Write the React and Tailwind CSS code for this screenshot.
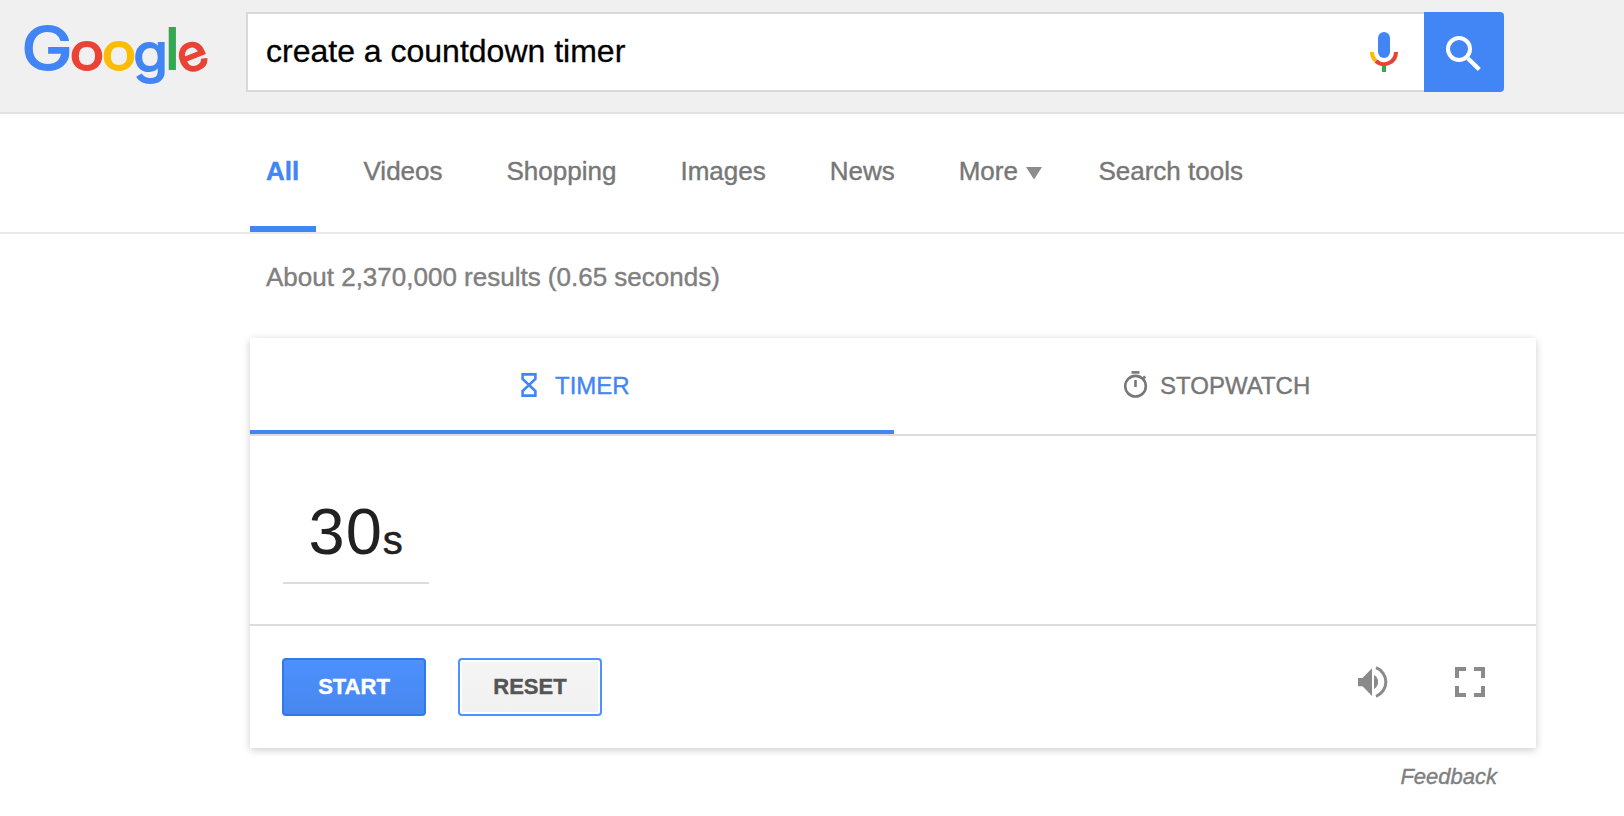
const NAV = ["Videos", "Shopping", "Images", "News"];

function Logo() {
  return (
    <svg
      className="h-[112px] w-[246px] shrink-0 font-['Inter',sans-serif]"
      viewBox="0 0 246 112"
      role="img"
      aria-label="Google"
      strokeWidth="1.8"
    >
      <text x="21.4" y="70" fontSize="60" fill="#4285f4" stroke="#4285f4" textLength="51" lengthAdjust="spacingAndGlyphs">G</text>
      <text x="69.8" y="70.3" fontSize="51" fill="#ea4335" stroke="#ea4335" textLength="34.4" lengthAdjust="spacingAndGlyphs">o</text>
      <text x="101.8" y="70.3" fontSize="51" fill="#fbbc05" stroke="#fbbc05" textLength="34.4" lengthAdjust="spacingAndGlyphs">o</text>
      <text x="133.3" y="71.5" fontSize="53" fill="#4285f4" stroke="#4285f4" textLength="34.8" lengthAdjust="spacingAndGlyphs">g</text>
      <text x="165.4" y="69.2" fontSize="56.5" fill="#34a853" stroke="#34a853" strokeWidth="2.2">l</text>
      <text x="177.3" y="70.3" fontSize="50" fill="#ea4335" stroke="#ea4335" textLength="30" lengthAdjust="spacingAndGlyphs" transform="rotate(-22 192.3 56)">e</text>
    </svg>
  );
}

function MicIcon() {
  return (
    <svg className="h-10 w-7" viewBox="0 0 28 40" fill="none">
      <rect x="8" y="0" width="12" height="26" rx="6" fill="#4285f4" />
      <path d="M2 20a12 12 0 0 0 4 9" stroke="#fbbc05" strokeWidth="4" />
      <path d="M6 29A12 12 0 0 0 26 20" stroke="#ea4335" strokeWidth="4" />
      <path d="M14 34v6" stroke="#34a853" strokeWidth="4" />
    </svg>
  );
}

function Header() {
  return (
    <header className="flex h-[114px] border-b-2 border-[#e2e2e2] bg-[#f0f0f0]">
      <Logo />
      <div className="mt-3 flex h-20">
        <div className="flex w-[1178px] items-center justify-between border-2 border-r-0 border-[#d9d9d9] bg-white pr-[26px] pl-[18px]">
          <span className="pb-0.5 text-[32px] leading-9 text-black [-webkit-text-stroke:0.3px]">create a countdown timer</span>
          <MicIcon />
        </div>
        <button className="w-20 rounded-r-[4px] bg-[#4285f4]" aria-label="Search">
          <svg className="size-20" viewBox="0 0 80 80" fill="none" stroke="#fff" strokeWidth="4">
            <circle cx="35" cy="37" r="11" />
            <path d="M44 46.5L55.3 57.5" strokeWidth="4.4" />
          </svg>
        </button>
      </div>
    </header>
  );
}

function Nav() {
  return (
    <nav className="flex h-[120px] gap-16 border-b-2 border-[#e9e9e9] pl-[250px] text-[26px] leading-[30px] text-[#777] [-webkit-text-stroke:0.4px]">
      <div className="-mr-[16.5px] h-[118px] w-[66px] border-b-6 border-[#4285f4] pt-[42px] pl-4 font-bold text-[#4285f4]">All</div>
      {NAV.map((label) => (
        <div key={label} className="pt-[42px]">{label}</div>
      ))}
      <div className="flex pt-[42px]">
        More
        <svg className="mt-[11px] ml-[8.5px] h-[13px] w-4" viewBox="0 0 16 13">
          <path d="M0 0H16L8 12.5Z" fill="#8c8c8c" />
        </svg>
      </div>
      <div className="-ml-2 pt-[42px]">Search tools</div>
    </nav>
  );
}

function HourglassIcon() {
  return (
    <svg className="h-6 w-4" viewBox="0 0 16 24" fill="none" stroke="#4285f4" strokeWidth="2.6">
      <path d="M1.6 1.4H14.4V6L8 12L1.6 6ZM8 12L14.4 18V22.6H1.6V18Z" />
    </svg>
  );
}

function StopwatchIcon() {
  return (
    <svg className="h-[27px] w-6" viewBox="0 0 24 27" fill="none" stroke="#777" strokeWidth="2.6">
      <circle cx="11.5" cy="15.2" r="10.3" />
      <path d="M7.5 1.4H15.5" />
      <path d="M11.5 9V16" />
      <path d="M18.5 8L21.2 5.5" />
    </svg>
  );
}

function TimerCard() {
  return (
    <section className="h-[410px] w-[1286px] bg-white shadow-[0_2px_8px_rgba(0,0,0,0.2)]">
      <div className="flex h-[98px] border-b-2 border-[#dcdcdc] text-2xl leading-7 [-webkit-text-stroke:0.4px]">
        <div className="flex h-24 w-[644px] border-b-4 border-[#4285f4] pl-[271px] text-[#4285f4]">
          <div className="mt-[35px]"><HourglassIcon /></div>
          <span className="mt-[34px] ml-[18px]">TIMER</span>
        </div>
        <div className="flex flex-1 pl-[230px] text-[#777]">
          <div className="mt-[33px]"><StopwatchIcon /></div>
          <span className="mt-[34px] ml-3">STOPWATCH</span>
        </div>
      </div>
      <div className="h-[190px] border-b-2 border-[#dcdcdc] pt-[50px] pl-[33px]">
        <div className="flex h-[98px] w-[146px] items-baseline border-b-2 border-[#dcdcdc] pl-[25.5px] text-[#212121]">
          <span className="text-[65px] leading-[92px] tracking-[1px]">30</span>
          <span className="text-[40px] leading-none [-webkit-text-stroke:0.5px]">s</span>
        </div>
      </div>
      <div className="flex items-start pt-8 pl-8">
        <button className="h-[58px] w-36 rounded-[4px] border-2 border-[#3079ed] bg-linear-to-b from-[#4d90fe] to-[#4787ed] pb-0.5 text-[22px] font-bold text-white [-webkit-text-stroke:0.4px]">
          START
        </button>
        <button className="ml-8 h-[58px] w-36 rounded-[4px] border-2 border-[#4d90fe] bg-linear-to-b from-[#f5f5f5] to-[#f1f1f1] pb-0.5 text-[22px] font-bold text-[#555] shadow-[inset_0_0_0_2px_#fff] [-webkit-text-stroke:0.4px]">
          RESET
        </button>
        <svg className="mt-2 ml-[756px] h-8 w-[30px]" viewBox="0 0 30 32" fill="#8a8a8a">
          <path d="M0 12H4.5L14 2.3V30L4.5 20.3H0Z" />
          <path d="M16 9A8 8 0 0 1 16 23Z" />
          <path d="M18 1.7A15.3 15.3 0 0 1 18 30.3" fill="none" stroke="#8a8a8a" strokeWidth="3" />
        </svg>
        <svg className="mt-[9px] ml-[67px] size-[30px]" viewBox="0 0 30 30" fill="none" stroke="#8a8a8a" strokeWidth="4">
          <path d="M2 11V2H11M19 2H28V11M28 19V28H19M11 28H2V19" />
        </svg>
      </div>
    </section>
  );
}

export default function App() {
  return (
    <div className="h-[816px] w-[1624px] overflow-hidden bg-white font-['Liberation_Sans',Arial,sans-serif]">
      <Header />
      <Nav />
      <main className="pl-[250px]">
        <p className="h-[104px] pt-7 pl-4 text-[26px] leading-[30px] text-[#808080] [-webkit-text-stroke:0.4px]">
          About 2,370,000 results (0.65 seconds)
        </p>
        <TimerCard />
        <p className="w-[1247px] pt-[17px] text-right text-[22px] leading-6 text-[#808080] italic [-webkit-text-stroke:0.4px]">Feedback</p>
      </main>
    </div>
  );
}
